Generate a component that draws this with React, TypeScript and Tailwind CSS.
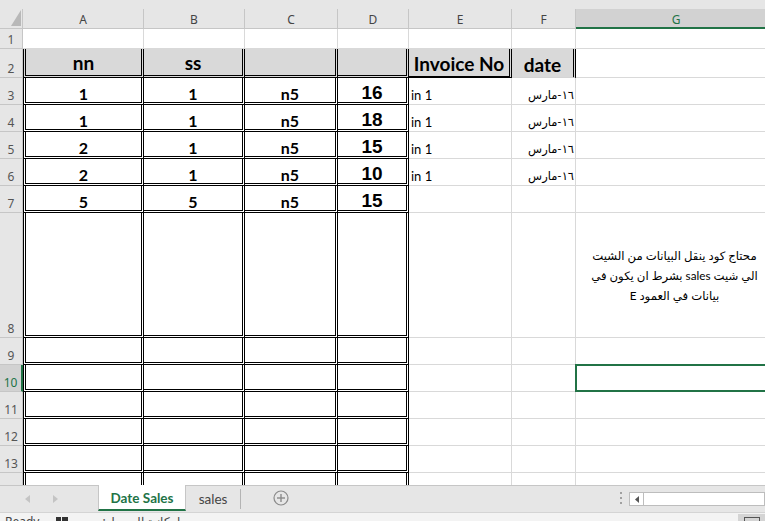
import React from 'react';

const COLS = ['A', 'B', 'C', 'D', 'E', 'F', 'G'];
const DATE = '١٦-مارس';

// row number -> cell values (A..F)
const DATA: Record<number, string[]> = {
  2: ['nn', 'ss', '', '', 'Invoice No', 'date'],
  3: ['1', '1', 'n5', '16', 'in 1', DATE],
  4: ['1', '1', 'n5', '18', 'in 1', DATE],
  5: ['2', '1', 'n5', '15', 'in 1', DATE],
  6: ['2', '1', 'n5', '10', 'in 1', DATE],
  7: ['5', '5', 'n5', '15', '', ''],
};

const ROWS = [1, 2, 3, 4, 5, 6, 7, 8, 9, 10, 11, 12, 13, 14];

const calibri = "font-[family-name:Lato,'DejaVu_Sans',sans-serif]";
const ui = "font-[family-name:'Noto_Sans',sans-serif]";

function cellClass(row: number, col: number) {
  const boxed = row >= 2 && col <= 3;
  if (boxed) {
    const base = 'border-r-[3px] border-b-[3px] border-double border-black';
    const left = col === 0 ? ' border-l-[3px]' : '';
    const fill = row === 2 ? ' bg-[#d9d9d9]' : ' bg-white';
    return base + left + fill;
  }
  if (row === 2 && col === 4) return 'border-r-[3px] border-b-[2px] border-double border-black bg-[#d9d9d9]';
  if (row === 2 && col === 5) return 'border-r-[3px] border-b border-double border-r-black border-b-[#d4d4d4] bg-[#d9d9d9]';
  return 'border-r border-b border-[#d9d9d9] bg-white';
}

function CellText({ row, col, value }: { row: number; col: number; value: string }) {
  if (!value) return null;
  if (row === 2) {
    const pad = col <= 1 ? 'pb-[3px]' : 'pb-[3px]';
    return <span className={`${calibri} text-[19px] font-bold text-black leading-none ${pad} w-full text-center`}>{value}</span>;
  }
  if (col === 3) {
    return <span className="font-[family-name:'Liberation_Sans',Arial,sans-serif] text-[19px] font-bold text-black leading-none pb-0 w-full text-center">{value}</span>;
  }
  if (col <= 2) {
    return <span className={`${calibri} text-[16px] font-bold text-black leading-none pb-0 w-full text-center`}>{value}</span>;
  }
  if (col === 4) {
    return <span className={`${calibri} text-[13px] text-black leading-none pb-[2px] pl-[2px] w-full`}>{value}</span>;
  }
  return (
    <span dir="rtl" className={`${calibri} text-[11.5px] text-black leading-none pb-[4px] pr-[1px] w-full text-right`}>{value}</span>
  );
}

function Grid() {
  return (
    <div className="h-[476px] overflow-hidden">
      <div className="grid w-[776px] grid-cols-[23px_121px_101px_93px_71px_103px_64px_200px] grid-rows-[20px_20px_29px_27px_27px_27px_27px_27px_125px_27px_27px_27px_27px_27px_27px]">
        {/* corner */}
        <div className="flex items-end justify-end border-r border-b border-[#c6c6c6] bg-[#e6e6e6] pr-px pb-[2px]">
          <svg width="10" height="16" viewBox="0 0 10 16">
            <polygon points="10,0 10,16 0,16" fill="#b8b8b8" />
          </svg>
        </div>
        {COLS.map(c =>
          c === 'G' ? (
            <div key={c} className={`${ui} flex items-center justify-center border-b-2 border-[#217346] bg-[#d2d2d2] pt-[3px] text-[12px] text-[#217346]`}>
              {c}
            </div>
          ) : (
            <div key={c} className={`${ui} flex items-center justify-center border-r border-b border-[#c6c6c6] bg-[#e6e6e6] pt-[3px] text-[12px] text-[#444]`}>
              {c}
            </div>
          )
        )}

        {ROWS.map(row => (
          <React.Fragment key={row}>
            {row === 10 ? (
              <div className={`${ui} flex items-end justify-center border-r-2 border-b border-r-[#217346] border-b-[#c6c6c6] bg-[#d2d2d2] pb-[2px] text-[12px] leading-none text-[#217346]`}>
                {row}
              </div>
            ) : (
              <div className={`${ui} flex items-end justify-center border-r border-b border-[#c6c6c6] bg-[#e6e6e6] pb-[2px] text-[12px] leading-none text-[#555]`}>
                {row}
              </div>
            )}
            {COLS.map((c, ci) => {
              const value = DATA[row]?.[ci] ?? '';
              if (c === 'G' && row === 8) {
                return (
                  <div key={c} className="flex flex-col items-center justify-center border-r border-b border-[#d9d9d9] bg-white pr-[2px]">
                    <span dir="rtl" className={`${calibri} block text-[11.7px] leading-[20px] text-black`}>محتاج كود ينقل البيانات من الشيت</span>
                    <span dir="rtl" className={`${calibri} block text-[11.7px] leading-[20px] text-black`}>الي شيت sales بشرط ان يكون في</span>
                    <span dir="rtl" className={`${calibri} block text-[11.7px] leading-[20px] text-black`}>بيانات في العمود E</span>
                  </div>
                );
              }
              if (c === 'G' && row === 10) {
                return (
                  <div key={c} className="relative border-r border-b border-[#d9d9d9] bg-white">
                    <div className="absolute -top-px -left-px -right-px -bottom-px border-2 border-[#217346]" />
                  </div>
                );
              }
              return (
                <div key={c} className={`flex items-end overflow-hidden ${cellClass(row, ci)}`}>
                  <CellText row={row} col={ci} value={value} />
                </div>
              );
            })}
          </React.Fragment>
        ))}
      </div>
    </div>
  );
}

function TabBar() {
  return (
    <div className="flex h-[27px] items-stretch border-t border-[#c6c6c6] bg-[#e6e6e6]">
      <div className="flex w-[98px] items-center gap-[23px] pl-[25px]">
        <svg width="5" height="8" viewBox="0 0 5 8"><polygon points="5,0 5,8 0,4" fill="#c4c4c4" /></svg>
        <svg width="5" height="8" viewBox="0 0 5 8"><polygon points="0,0 0,8 5,4" fill="#c4c4c4" /></svg>
      </div>
      <div className={`${calibri} -mt-px mb-[1px] flex w-[88px] items-center justify-center border-x border-b-2 border-x-[#c6c6c6] border-b-[#217346] bg-white pt-[2px] text-[13.5px] font-bold text-[#217346]`}>
        Date Sales
      </div>
      <div className={`${calibri} flex w-[54px] items-center justify-center text-[13.5px] text-[#444]`}>
        sales
      </div>
      <div className="my-[3px] w-px bg-[#b4b4b4]" />
      <div className="flex w-[80px] items-center justify-center pb-[2px]">
        <svg width="16" height="16" viewBox="0 0 16 16">
          <circle cx="8" cy="8" r="7" fill="none" stroke="#8a8a8a" strokeWidth="1.2" />
          <line x1="8" y1="4" x2="8" y2="12" stroke="#8a8a8a" strokeWidth="1.4" />
          <line x1="4" y1="8" x2="12" y2="8" stroke="#8a8a8a" strokeWidth="1.4" />
        </svg>
      </div>
      <div className="flex-1" />
      <div className="flex w-[16px] flex-col items-center justify-center gap-[3px] pb-[2px]">
        <span className="h-[2px] w-[2px] bg-[#a0a0a0]" />
        <span className="h-[2px] w-[2px] bg-[#a0a0a0]" />
        <span className="h-[2px] w-[2px] bg-[#a0a0a0]" />
      </div>
      <div className="mt-[6px] mb-[6px] flex w-[136px] border border-[#bdbdbd] bg-white">
        <div className="flex w-[14px] items-center justify-center border-r border-[#bdbdbd]">
          <svg width="4" height="7" viewBox="0 0 4 7"><polygon points="4,0 4,7 0,3.5" fill="#555" /></svg>
        </div>
        <div className="flex-1" />
      </div>
    </div>
  );
}

function StatusBar() {
  return (
    <div className="h-[9px] overflow-hidden border-t border-[#d4d4d4] bg-[#f3f3f3]">
      <div className={`${ui} flex h-[22px] items-start pt-[1px] text-[12px] leading-[16px] text-[#444]`}>
        <span className="pl-[5px]">Ready</span>
        <span className="ml-[17px] mt-[3px] flex gap-px">
          <span className="h-[8px] w-[5px] bg-[#333]" />
          <span className="h-[8px] w-[6px] bg-[#333]" />
        </span>
        <span dir="rtl" className="ml-[14px]">إمكانية الوصول: جيد</span>
        <div className="flex-1" />
        <div className="flex h-[22px] w-[27px] items-start justify-center bg-[#d4d4d4] pt-[3px]">
          <span className="h-[10px] w-[16px] border border-[#555]" />
        </div>
      </div>
    </div>
  );
}

export default function App() {
  return (
    <div className="flex h-[521px] w-[765px] flex-col overflow-hidden bg-white">
      <div className="h-[9px] bg-[#e6e6e6]" />
      <Grid />
      <TabBar />
      <StatusBar />
    </div>
  );
}
